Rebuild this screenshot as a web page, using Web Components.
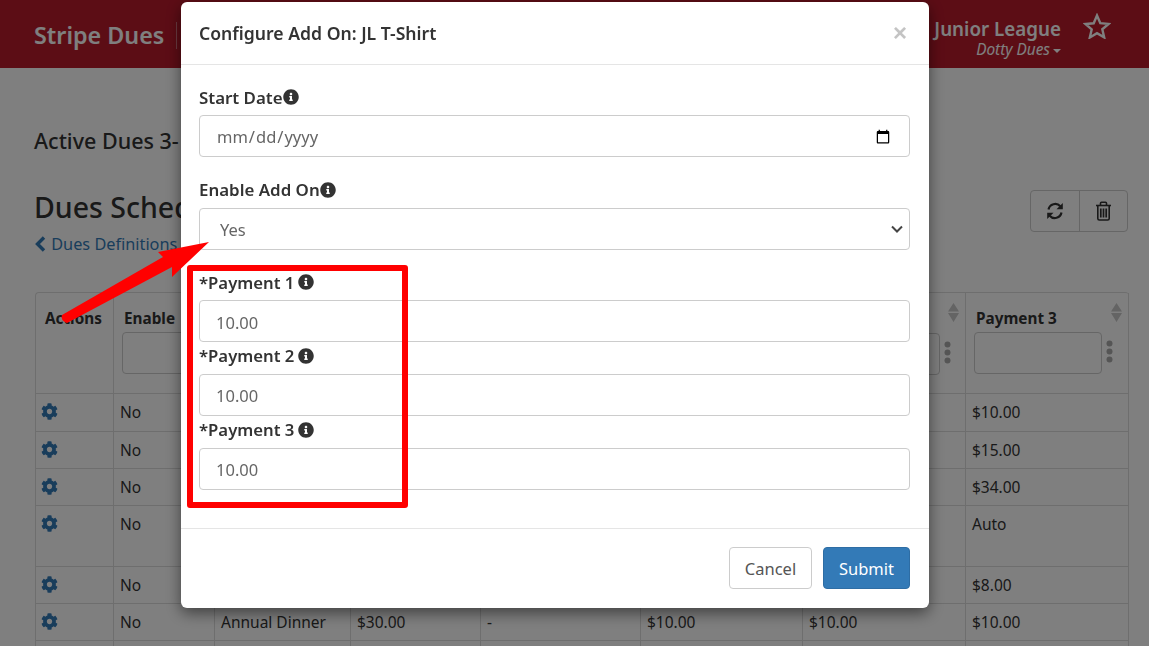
<!DOCTYPE html>
<html lang="en">
<head>
<meta charset="utf-8">
<title>Stripe Dues</title>
<style>
    html, body { margin: 0; height: 100%; overflow: hidden; background: #fff; }
    body { font-family: "Noto Sans", "Open Sans", sans-serif; color: #333; }
</style>
</head>
<body>
<app-navbar></app-navbar>
<dues-page></dues-page>
<addon-modal title="Configure Add On: JL T-Shirt"></addon-modal>
<red-markup></red-markup>

<script>
const ICONS = {
    info: '<path d="M256 8C119 8 8 119 8 256s111 248 248 248 248-111 248-248S393 8 256 8zm0 110c23.2 0 42 18.8 42 42s-18.8 42-42 42-42-18.8-42-42 18.8-42 42-42zm56 254c0 6.6-5.4 12-12 12h-88c-6.6 0-12-5.4-12-12v-24c0-6.6 5.4-12 12-12h12v-64h-12c-6.6 0-12-5.4-12-12v-24c0-6.6 5.4-12 12-12h64c6.6 0 12 5.4 12 12v100h12c6.6 0 12 5.4 12 12v24z"/>',
    cog: '<path d="M487.4 315.7l-42.6-24.6c4.3-23.2 4.3-47 0-70.2l42.6-24.6c4.9-2.8 7.1-8.6 5.5-14-11.1-35.6-30-67.8-54.7-94.6-3.8-4.1-10-5.1-14.8-2.3L380.8 110c-17.9-15.4-38.5-27.3-60.8-35.1V25.8c0-5.6-3.9-10.5-9.4-11.7-36.7-8.2-74.3-7.8-109.2 0-5.5 1.2-9.4 6.1-9.4 11.7V75c-22.2 7.9-42.8 19.8-60.8 35.1L88.7 85.5c-4.9-2.8-11-1.9-14.8 2.3-24.7 26.7-43.6 58.9-54.7 94.6-1.7 5.4.6 11.2 5.5 14L67.3 221c-4.3 23.2-4.3 47 0 70.2l-42.6 24.6c-4.9 2.8-7.1 8.6-5.5 14 11.1 35.6 30 67.8 54.7 94.6 3.8 4.1 10 5.1 14.8 2.3l42.6-24.6c17.9 15.4 38.5 27.3 60.8 35.1v49.2c0 5.6 3.9 10.5 9.4 11.7 36.7 8.2 74.3 7.8 109.2 0 5.5-1.2 9.4-6.1 9.4-11.7v-49.2c22.2-7.9 42.8-19.8 60.8-35.1l42.6 24.6c4.9 2.8 11 1.9 14.8-2.3 24.7-26.7 43.6-58.9 54.7-94.6 1.5-5.5-.7-11.3-5.6-14.1zM256 336c-44.1 0-80-35.9-80-80s35.9-80 80-80 80 35.9 80 80-35.9 80-80 80z"/>'
};

class FaIcon extends HTMLElement {
    connectedCallback() {
        const size = this.getAttribute('size') || 16;
        this.attachShadow({ mode: 'open' }).innerHTML = `
        <style>
            :host { display: inline-flex; vertical-align: -2px; }
            svg { display: block; fill: currentColor; }
        </style>
        <svg width="${size}" height="${size}" viewBox="0 0 512 512">${ICONS[this.getAttribute('name')]}</svg>`;
    }
}
customElements.define('fa-icon', FaIcon);

class AppNavbar extends HTMLElement {
    constructor() {
        super();
        this.attachShadow({ mode: 'open' }).innerHTML = `
        <style>
            :host {
                display: flex;
                align-items: center;
                height: 68px;
                padding: 0 38px 0 34px;
                box-sizing: border-box;
                background: #b91a2b;
                color: #fff;
            }
            .brand { font-size: 23.300px; font-weight: 600; padding-right: 12px; border-right: 1px solid #ffffff66; height: 27px; line-height: 27px; margin-top: 2px; }
            .org { margin-left: auto; text-align: right; margin-top: 7px; }
            .org b { display: block; font-size: 18.800px; font-weight: 600; line-height: 24px; }
            .org i { font-size: 15.400px; line-height: 18px; display: block; }
            .caret { display: inline-block; border: 4.5px solid transparent; border-top-color: #fff; border-bottom: 0; vertical-align: 2px; margin-left: 3px; }
            svg { margin-left: 22px; margin-bottom: 16px; display: block; }
        </style>
        <span class="brand">Stripe Dues</span>
        <div class="org">
            <b>Junior League</b>
            <i>Dotty Dues<span class="caret"></span></i>
        </div>
        <svg width="28" height="26" viewBox="0 0 28 26"><path d="M14 2.5l3.3 7.7 8.3.7-6.3 5.4 1.9 8.1L14 20.200l-7.200 4.300 1.900-8.100-6.300-5.400 8.300-.7z" fill="none" stroke="#fff" stroke-width="2.400"/></svg>`;
    }
}
customElements.define('app-navbar', AppNavbar);

class DuesPage extends HTMLElement {
    constructor() {
        super();
        this.attachShadow({ mode: 'open' }).innerHTML = `
        <style>
            :host { display: block; padding: 0 21px 0 34px; }
            h4 { margin: 59px 0 0; font-size: 21.500px; font-weight: 500; line-height: 28px; }
            .head { display: flex; justify-content: space-between; margin-top: 35px; }
            h2 { margin: 0; font-size: 28.500px; font-weight: 500; line-height: 34px; }
            a { display: block; color: #337ab7; font-size: 16.300px; line-height: 20px; margin-top: 10px; }
            a svg { vertical-align: -2px; margin-right: 1px; }
            .group { display: flex; height: 42px; border: 1px solid #ccc; border-radius: 4px; box-sizing: border-box; width: 98px; color: #333; }
            .group span { flex: 1; display: flex; align-items: center; justify-content: center; }
            .group span + span { border-left: 1px solid #ccc; }
            dues-table { margin: 38px 0 0 1px; }
        </style>
        <h4>Active Dues 3-</h4>
        <div class="head">
            <div>
                <h2>Dues Sched</h2>
                <a><svg width="12" height="16" viewBox="0 0 12 16"><path d="M10 1.500L3.500 8l6.500 6.500" fill="none" stroke="currentColor" stroke-width="3.400"/></svg> Dues Definitions</a>
            </div>
            <div class="group">
                <span><svg width="18" height="18" viewBox="0 0 18 18" fill="none" stroke="currentColor" stroke-width="2.200"><path d="M2.500 7.500A6.800 6.800 0 0 1 14.300 4.300"/><path d="M15.500 10.500A6.800 6.800 0 0 1 3.700 13.700"/><path d="M16.800 1v6.300h-6.300z" fill="currentColor" stroke="none"/><path d="M1.200 17v-6.300h6.300z" fill="currentColor" stroke="none"/></svg></span>
                <span><svg width="17" height="20" viewBox="0 0 17 20" fill="none" stroke="currentColor" stroke-width="1.600"><path d="M1 4.500h15"/><path d="M5.500 4V2.300q0-1 1-1h4q1 0 1 1V4"/><path d="M2.800 4.500v13q0 1.500 1.500 1.500h8.400q1.500 0 1.500-1.500v-13"/><path d="M5.800 7.500v9M8.500 7.500v9M11.200 7.500v9" stroke-width="1.700"/></svg></span>
            </div>
        </div>
        <dues-table></dues-table>`;
    }
}
customElements.define('dues-page', DuesPage);

class DuesTable extends HTMLElement {
    constructor() {
        super();
        const widths = [78, 101, 136, 130, 160, 162, 163, 163];
        const rows = [
            ['No', '', '', '', '', '', '$10.00'],
            ['No', '', '', '', '', '', '$15.00'],
            ['No', '', '', '', '', '', '$34.00'],
            ['No', '', '', '', '', '', 'Auto'],
            ['No', '', '', '', '', '', '$8.00'],
            ['No', 'Annual Dinner', '$30.00', '-', '$10.00', '$10.00', '$10.00']
        ];
        const heights = { 0: 38, 3: 61 };
        const dots = '<svg class="dots" width="7" height="23" viewBox="0 0 7 23" fill="currentColor"><circle cx="3.500" cy="3.500" r="3"/><circle cx="3.500" cy="11.500" r="3"/><circle cx="3.500" cy="19.500" r="3"/></svg>';
        const sort = '<svg class="sort" width="11" height="19" viewBox="0 0 11 19" fill="#c8c8c8"><path d="M5.500 0L11 8.500H0zM0 10h11l-5.500 9z"/></svg>';
        const filter = (w) => `<div class="filter"><span class="box" style="width:${w}px"></span>${dots}</div>`;
        this.attachShadow({ mode: 'open' }).innerHTML = `
        <style>
            :host { display: block; font-size: 15.500px; }
            table { width: 1093px; table-layout: fixed; border-collapse: separate; border-spacing: 0; border: 1px solid #ddd; border-right: 0; border-bottom: 0; border-radius: 4px 4px 0 0; }
            th, td { border-right: 1px solid #ddd; border-bottom: 1px solid #ddd; box-sizing: border-box; vertical-align: top; text-align: left; padding: 7px 6px; line-height: 22px; overflow: hidden; white-space: nowrap; }
            th { height: 101px; position: relative; font-size: 15.300px; font-weight: 700; padding: 14px 10px; }
            th:first-child { padding-left: 9px; }
            tr { height: 37px; }
            .link { color: #337ab7; display: block; margin: 2px 0 0 -1px; }
            .filter { display: flex; gap: 4px; margin: 3px 0 0 -2px; color: #aaa; }
            .box { display: block; height: 42px; border: 1px solid #ccc; border-radius: 4px; box-sizing: border-box; flex: none; }
            .dots { flex: none; margin-top: 8px; }
            .sort { position: absolute; top: 10px; right: 6px; }
        </style>
        <table>
            <colgroup>${widths.map(w => `<col style="width:${w}px">`).join('')}</colgroup>
            <thead><tr>
                <th>Actions</th>
                <th>Enable${filter(90)}</th>
                <th></th><th></th><th></th><th></th>
                <th>${sort}<div class="filter" style="margin:26px 4px 0 0;justify-content:flex-end"><span class="box" style="width:60px"></span>${dots}</div></th>
                <th>Payment 3${sort}${filter(128)}</th>
            </tr></thead>
            <tbody>
                ${rows.map((r, i) => `<tr${heights[i] ? ` style="height:${heights[i]}px"` : ''}>
                    <td><fa-icon class="link" name="cog" size="17"></fa-icon></td>
                    ${r.map(c => `<td>${c}</td>`).join('')}
                </tr>`).join('')}
                <tr>${widths.map(() => '<td></td>').join('')}</tr>
            </tbody>
        </table>`;
    }
}
customElements.define('dues-table', DuesTable);

class FormField extends HTMLElement {
    constructor() {
        super();
        this.attachShadow({ mode: 'open' }).innerHTML = `
        <style>
            :host { display: block; }
            label { display: flex; align-items: center; height: 20px; margin-bottom: 8px; font-size: var(--label-size, 16.900px); font-weight: 600; color: #333; gap: var(--icon-gap, 0); }
        </style>
        <label><slot name="label"></slot><fa-icon name="info" size="16"></fa-icon></label>
        <slot></slot>`;
    }
}
customElements.define('form-field', FormField);

class AddonModal extends HTMLElement {
    constructor() {
        super();
        this.attachShadow({ mode: 'open' }).innerHTML = `
        <style>
            :host { position: fixed; inset: 0; display: block; background: rgba(0,0,0,.5); }
            .dialog { position: absolute; left: 181px; top: 2px; width: 748px; height: 606px; box-sizing: border-box; background: #fff; border-radius: 6px; box-shadow: 0 5px 15px rgba(0,0,0,.5); display: flex; flex-direction: column; color: #333; }
            header { height: 63px; box-sizing: border-box; flex: none; display: flex; align-items: center; justify-content: space-between; padding: 0 22px 0 18px; border-bottom: 1px solid #e5e5e5; }
            h3 { margin: 0; font-size: 17.600px; font-weight: 600; }
            .close { font-size: 24px; font-weight: 700; color: #c4c4c4; line-height: 1; font-family: "Liberation Sans", sans-serif; }
            .body { flex: 1; padding: 22px 19px 0 18px; display: flex; flex-direction: column; }
            input, select { display: block; width: 100%; height: 41.800px; box-sizing: border-box; border: 1px solid #ccc; border-radius: 4px; background: #fff; padding: 7px 16px 5px; font: 400 16.500px "Noto Sans", sans-serif; color: #666; outline: none; }
            select { appearance: none; padding: 2px 16px 0 20px; background: #fff url("data:image/svg+xml,%3Csvg xmlns='http://www.w3.org/2000/svg' width='12' height='8'%3E%3Cpath d='M1 1.500l5 5 5-5' fill='none' stroke='%23444' stroke-width='2'/%3E%3C/svg%3E") no-repeat right 6px center; }
            .gap { margin-bottom: 23.200px; }
            .tight { margin-bottom: 4px; }
            .pay { --icon-gap: 4px; --label-size: 16.700px; }
            footer { flex: none; height: 80px; box-sizing: border-box; border-top: 1px solid #e5e5e5; padding: 18px 19px 0 0; display: flex; justify-content: flex-end; gap: 11px; }
            button { height: 42px; box-sizing: border-box; border: 1px solid #ccc; border-radius: 4px; background: #fff; color: #555; font: 400 16.500px "Noto Sans", sans-serif; padding: 0; width: 83px; }
            button.primary { background: #337ab7; border-color: #2e6da4; color: #fff; width: 87px; }
        </style>
        <div class="dialog">
            <header><h3>${this.getAttribute('title')}</h3><span class="close">×</span></header>
            <div class="body">
                <form-field class="gap"><span slot="label">Start Date</span><input type="date"></form-field>
                <form-field style="margin-bottom:22.400px"><span slot="label">Enable Add On</span><select><option>Yes</option></select></form-field>
                <form-field class="pay tight"><span slot="label">*Payment 1</span><input value="10.00"></form-field>
                <form-field class="pay tight"><span slot="label">*Payment 2</span><input value="10.00"></form-field>
                <form-field class="pay"><span slot="label">*Payment 3</span><input value="10.00"></form-field>
            </div>
            <footer><button>Cancel</button><button class="primary">Submit</button></footer>
        </div>`;
    }
}
customElements.define('addon-modal', AddonModal);

// the red box and arrow drawn on top of the screenshot
class RedMarkup extends HTMLElement {
    constructor() {
        super();
        this.attachShadow({ mode: 'open' }).innerHTML = `
        <style>
            :host { position: fixed; inset: 0; display: block; pointer-events: none; }
            .box { position: absolute; left: 187px; top: 265px; width: 221px; height: 243px; box-sizing: border-box; border: 6px solid #f00; border-radius: 3px; }
            svg { position: absolute; left: 0; top: 0; }
        </style>
        <div class="box"></div>
        <svg width="1149" height="646"><path d="M209 242L158 252 163 257 62 315Q60 320 67 323L172 267 172 277z" fill="#f00"/></svg>`;
    }
}
customElements.define('red-markup', RedMarkup);
</script>
</body>
</html>
